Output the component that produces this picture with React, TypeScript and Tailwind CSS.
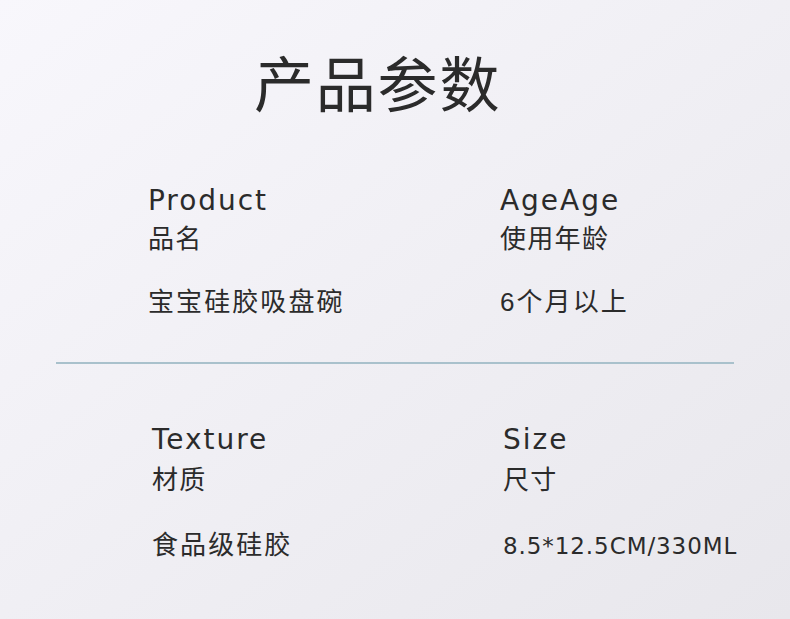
const cjk = "font-['Liberation_Sans','Noto_Sans_CJK_SC',sans-serif]";
const latin = "font-['DejaVu_Sans','Noto_Sans_CJK_SC',sans-serif]";

function Cell({
    en,
    cn,
    value,
    cnClass,
    valueClass,
}: {
    en: string;
    cn: string;
    value: string;
    cnClass: string;
    valueClass: string;
}) {
    return (
        <div className="flex flex-col">
            <p className={`text-[28px] leading-none tracking-[0.07em] ${latin}`}>{en}</p>
            <p className={`${cnClass} text-[26px] leading-none tracking-[0.05em]`}>{cn}</p>
            <p className={`${valueClass} leading-none`}>{value}</p>
        </div>
    );
}

export default function App() {
    return (
        <div
            className={`w-[790px] h-[619px] overflow-hidden bg-linear-to-br from-[#f8f7fc] to-[#e8e7ec] text-[#2b2b2b] ${cjk}`}
        >
            <h1 className="pt-[57px] pl-[254px] text-[60px] leading-none tracking-[0.03em]">产品参数</h1>

            <div className="mt-[70px] pl-[148px] grid grid-cols-[352px_1fr]">
                <Cell en="Product" cn="品名" value="宝宝硅胶吸盘碗" cnClass="mt-[11px]" valueClass="mt-[37px] text-[26px] tracking-[0.08em]" />
                <Cell en="AgeAge" cn="使用年龄" value="6个月以上" cnClass="mt-[11px]" valueClass="mt-[37px] text-[26px] tracking-[0.08em]" />
            </div>

            <div className="mt-[47px] mx-[56px] h-[2px] bg-[#a9c1cc]" />

            <div className="mt-[62px] pl-[152px] grid grid-cols-[351px_1fr]">
                <Cell en="Texture" cn="材质" value="食品级硅胶" cnClass="mt-[13px]" valueClass="mt-[39px] text-[26px] tracking-[0.08em]" />
                <Cell
                    en="Size"
                    cn="尺寸"
                    value="8.5*12.5CM/330ML"
                    cnClass="mt-[13px]"
                    valueClass={`mt-[42px] text-[23px] tracking-[0.04em] ${latin}`}
                />
            </div>
        </div>
    );
}
